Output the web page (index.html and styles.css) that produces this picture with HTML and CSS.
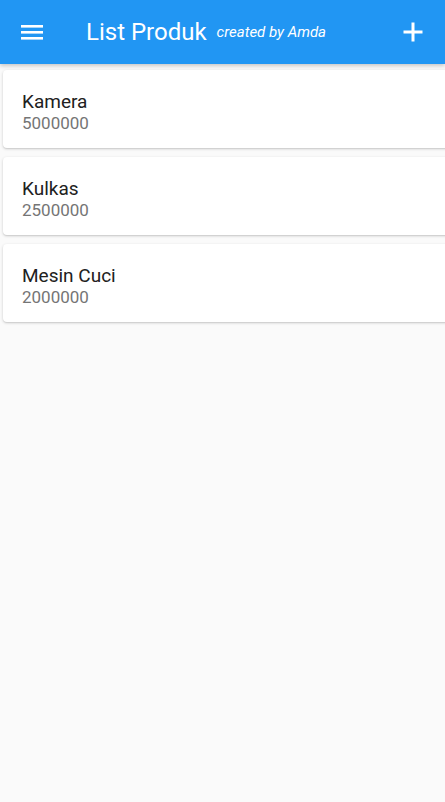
FILE: index.html
```html
<!DOCTYPE html>
<html lang="id">
<head>
<meta charset="utf-8">
<title>List Produk</title>
<link rel="stylesheet" href="styles.css">
</head>
<body>
<header class="appbar">
  <button class="icon-btn menu" aria-label="Menu">
    <svg width="24" height="16" viewBox="0 0 24 16"><rect x="1" y="1" width="22" height="2.6" fill="#fff"/><rect x="1" y="7" width="22" height="2.6" fill="#fff"/><rect x="1" y="13" width="22" height="2.6" fill="#fff"/></svg>
  </button>
  <div class="title-wrap">
    <span class="title">List Produk</span>
    <span class="subtitle">created by Amda</span>
  </div>
  <button class="icon-btn add" aria-label="Tambah">
    <svg width="20" height="20" viewBox="0 0 20 20"><rect x="8.5" y="0.5" width="3" height="19" fill="#fff"/><rect x="0.5" y="8.5" width="19" height="3" fill="#fff"/></svg>
  </button>
</header>
<main class="list">
  <div class="card"><div class="name">Kamera</div><div class="price">5000000</div></div>
  <div class="card"><div class="name">Kulkas</div><div class="price">2500000</div></div>
  <div class="card"><div class="name">Mesin Cuci</div><div class="price">2000000</div></div>
</main>
</body>
</html>
```
FILE: styles.css
```css
html, body { margin: 0; padding: 0; }
body {
  background: #fafafa;
  font-family: Roboto, "Liberation Sans", sans-serif;
  width: 445px;
  height: 802px;
  overflow: hidden;
}
.appbar {
  height: 64px;
  background: #2196f3;
  display: flex;
  align-items: center;
  box-shadow: 0 2px 4px rgba(0,0,0,0.2);
  position: relative;
  z-index: 1;
}
.icon-btn {
  border: 0;
  background: none;
  padding: 0;
  display: flex;
  align-items: center;
  justify-content: center;
}
.menu { margin-left: 20px; width: 24px; height: 24px; }
.title-wrap {
  flex: 1;
  display: flex;
  align-items: center;
  margin-left: 42px;
  margin-top: -1px;
}
.title {
  color: #fff;
  font-size: 24px;
  font-weight: 400;
}
.subtitle {
  color: #fff;
  font-size: 15px;
  font-style: italic;
  margin-left: 10px;
}
.add { margin-right: 22px; width: 20px; height: 20px; }
.list {
  display: flex;
  flex-direction: column;
  gap: 9px;
  padding: 6px 0 0 3px;
}
.card {
  width: 460px;
  height: 78px;
  box-sizing: border-box;
  background: #fff;
  border-radius: 4px;
  box-shadow: 0 1px 3px rgba(0,0,0,0.18), 0 1px 1px rgba(0,0,0,0.06);
  padding: 20px 0 0 19px;
}
.name {
  font-size: 19px;
  color: #212121;
  line-height: 23px;
}
.price {
  font-size: 17px;
  color: #757575;
  line-height: 20px;
}
```
